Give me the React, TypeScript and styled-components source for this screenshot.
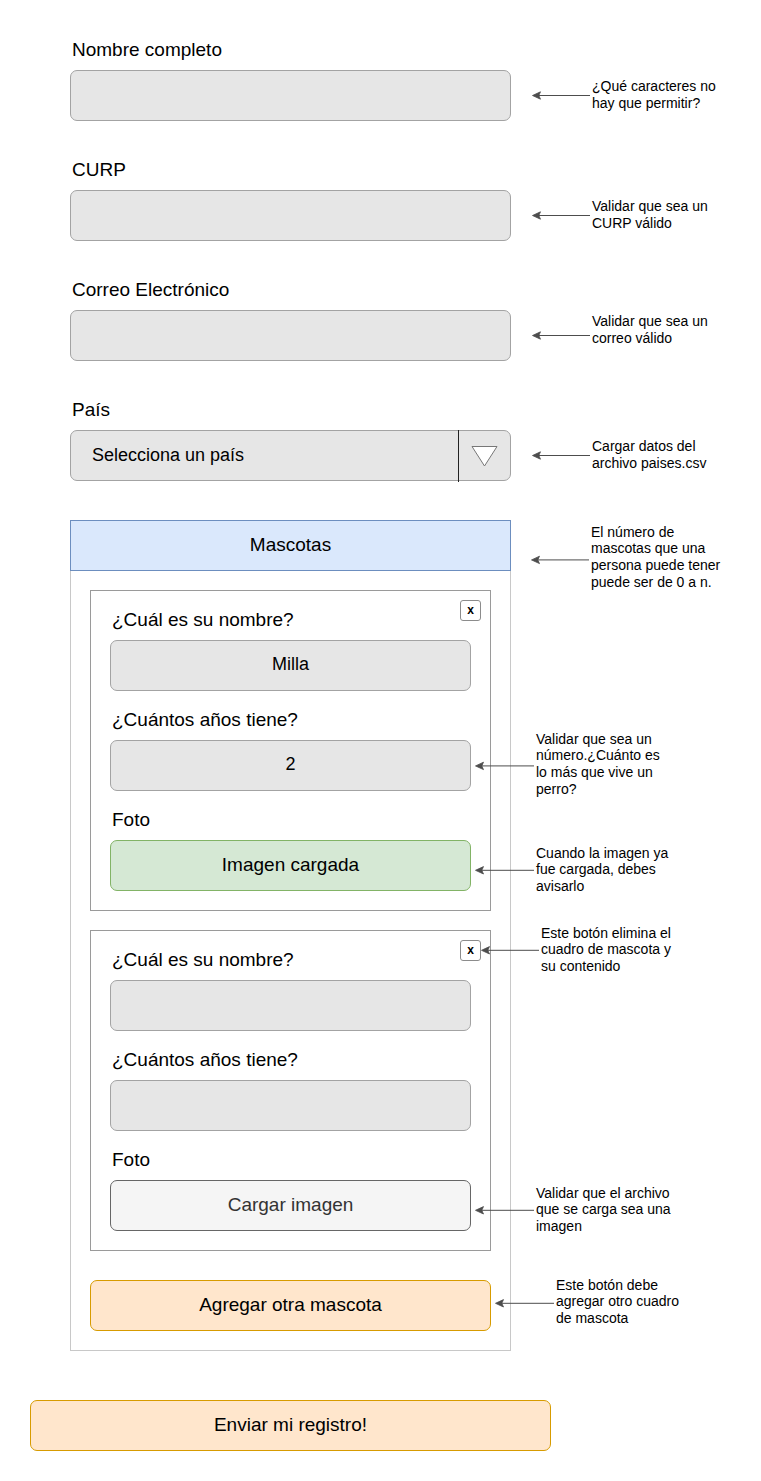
import React from "react";
import styled, { createGlobalStyle } from "styled-components";

const GlobalStyle = createGlobalStyle`
  html, body {
    margin: 0;
    padding: 0;
    background: #ffffff;
  }
  body {
    font-family: "Liberation Sans", Arial, Helvetica, sans-serif;
    color: #000000;
  }
  * { box-sizing: border-box; }
`;

const Page = styled.div`
  width: 761px;
  min-height: 1481px;
  padding: 39px 0 30px 30px;
`;

const Form = styled.div`
  display: flex;
  flex-direction: column;
  margin-left: 40px;
`;

const Field = styled.div<{ $after?: number }>`
  display: flex;
  flex-direction: column;
  margin-bottom: ${(p) => p.$after ?? 38}px;
`;

const FieldLabel = styled.div`
  font-size: 19px;
  line-height: 21px;
  margin: 0 0 10px 2px;
  white-space: nowrap;
`;

const Row = styled.div`
  display: flex;
  align-items: center;
`;

const InputBox = styled.div<{ $width?: number }>`
  width: ${(p) => p.$width ?? 441}px;
  height: 51px;
  border: 1px solid #a3a3a3;
  border-radius: 7px;
  background: #e6e6e6;
  display: flex;
  align-items: center;
  justify-content: center;
  padding-bottom: 2px;
  font-size: 18px;
  position: relative;
  flex-shrink: 0;
`;

const SelectBox = styled(InputBox)`
  justify-content: flex-start;
  padding-bottom: 0;
`;

const SelectValue = styled.div`
  flex: 1;
  padding-left: 21px;
  padding-bottom: 1px;
  font-size: 18px;
  white-space: nowrap;
`;

const SelectToggle = styled.div`
  width: 52px;
  align-self: stretch;
  margin: -1px 0 -2px 0;
  border-left: 1px solid #222222;
  display: flex;
  align-items: center;
  justify-content: center;
  padding-bottom: 1px;
`;

const Panel = styled.div`
  width: 441px;
  border: 1px solid #c8c8c8;
  padding: 0 19px 19px;
  display: flex;
  flex-direction: column;
`;

const PanelHeader = styled.div`
  position: relative;
  height: 51px;
  margin: -1px -20px 0;
  background: #dae8fc;
  border: 1px solid #6c8ebf;
  display: flex;
  align-items: center;
  justify-content: center;
  padding-bottom: 2px;
  font-size: 19px;
`;

const PetCard = styled.div`
  position: relative;
  width: 401px;
  margin-top: 19px;
  border: 1px solid #9a9a9a;
  padding: 18px 19px 19px;
  display: flex;
  flex-direction: column;
`;

const PetLabel = styled.div`
  font-size: 19px;
  line-height: 21px;
  margin: 0 0 10px 2px;
  white-space: nowrap;
`;

const PetInput = styled(InputBox)`
  width: 361px;
  margin-bottom: 18px;
`;

type Tone = "loaded" | "upload";

const PhotoButton = styled.div<{ $tone: Tone }>`
  position: relative;
  width: 361px;
  height: 51px;
  border-radius: 7px;
  display: flex;
  align-items: center;
  justify-content: center;
  padding-bottom: 2px;
  font-size: 19px;
  background: ${(p) => (p.$tone === "loaded" ? "#d5e8d4" : "#f5f5f5")};
  border: 1px solid ${(p) => (p.$tone === "loaded" ? "#82b366" : "#666666")};
  color: ${(p) => (p.$tone === "loaded" ? "#000000" : "#333333")};
`;

const CloseButton = styled.div`
  position: absolute;
  top: 9px;
  right: 9px;
  width: 21px;
  height: 21px;
  border: 1px solid #8c8c8c;
  border-radius: 3px;
  background: #ffffff;
  display: flex;
  align-items: center;
  justify-content: center;
  font-size: 12px;
  font-weight: bold;
  line-height: 1;
  padding-bottom: 2px;
`;

const ActionButton = styled.div<{ $width: number }>`
  position: relative;
  width: ${(p) => p.$width}px;
  height: 51px;
  border: 1px solid #d79b00;
  border-radius: 7px;
  background: #ffe6cc;
  display: flex;
  align-items: center;
  justify-content: center;
  padding-bottom: 2px;
  font-size: 19px;
`;

const AddButtonWrap = styled.div`
  margin-top: 29px;
  display: flex;
`;

const SubmitWrap = styled.div`
  margin-top: 49px;
  display: flex;
`;

const InlineCallout = styled.div<{ $gap: number; $dy: number }>`
  display: flex;
  align-items: center;
  margin-left: ${(p) => p.$gap}px;
  transform: translateY(${(p) => p.$dy}px);
`;

const FloatingCallout = styled.div<{ $gap: number; $dy: number }>`
  position: absolute;
  left: calc(100% + ${(p) => p.$gap}px);
  top: 50%;
  transform: translateY(calc(-50% + ${(p) => p.$dy}px));
  display: flex;
  align-items: center;
  pointer-events: none;
  z-index: 2;
`;

const Note = styled.div<{ $dy: number }>`
  margin-left: 2px;
  font-size: 14px;
  font-weight: normal;
  line-height: 16.8px;
  white-space: nowrap;
  color: #000000;
  text-align: left;
  transform: translateY(${(p) => p.$dy}px);
`;

const ArrowLine: React.FC<{ length: number }> = ({ length }) => (
  <svg width={length} height={11} viewBox={`0 0 ${length} 11`} style={{ display: "block", flexShrink: 0 }}>
    <line x1={6} y1={5.5} x2={length} y2={5.5} stroke="#4d4d4d" strokeWidth={1} />
    <path d="M0.5 5.5 L8.5 1.8 L6.8 5.5 L8.5 9.2 Z" fill="#4d4d4d" stroke="#4d4d4d" strokeWidth={0.8} strokeLinejoin="miter" />
  </svg>
);

type CalloutProps = {
  lines: string[];
  gap: number;
  length: number;
  dy?: number;
  noteDy?: number;
  floating?: boolean;
};

const Callout: React.FC<CalloutProps> = ({ lines, gap, length, dy = 0, noteDy = -1, floating }) => {
  const content = (
    <>
      <ArrowLine length={length} />
      <Note $dy={noteDy}>
        {lines.map((l, i) => (
          <React.Fragment key={i}>
            {l}
            {i < lines.length - 1 && <br />}
          </React.Fragment>
        ))}
      </Note>
    </>
  );
  return floating ? (
    <FloatingCallout $gap={gap} $dy={dy}>{content}</FloatingCallout>
  ) : (
    <InlineCallout $gap={gap} $dy={dy}>{content}</InlineCallout>
  );
};

const Triangle = () => (
  <svg width={27} height={22} viewBox="0 0 27 22" style={{ display: "block" }}>
    <path d="M1 1.5 L26 1.5 L13.5 21 Z" fill="#ffffff" stroke="#777777" strokeWidth={1} strokeLinejoin="miter" />
  </svg>
);

type Pet = {
  name: string;
  age: string;
  photo: Tone;
  closeNote?: string[];
  photoNote: string[];
  ageNote?: string[];
};

const pets: Pet[] = [
  {
    name: "Milla",
    age: "2",
    photo: "loaded",
    ageNote: ["Validar que sea un", "número.¿Cuánto es", "lo más que vive un", "perro?"],
    photoNote: ["Cuando la imagen ya", "fue cargada, debes", "avisarlo"],
  },
  {
    name: "",
    age: "",
    photo: "upload",
    closeNote: ["Este botón elimina el", "cuadro de mascota y", "su contenido"],
    photoNote: ["Validar que el archivo", "que se carga sea una", "imagen"],
  },
];

const fields = [
  { label: "Nombre completo", note: ["¿Qué caracteres no", "hay que permitir?"], noteDy: -1 },
  { label: "CURP", note: ["Validar que sea un", "CURP válido"], noteDy: -1 },
  { label: "Correo Electrónico", note: ["Validar que sea un", "correo válido"], noteDy: -6 },
];

const PetBlock: React.FC<{ pet: Pet }> = ({ pet }) => (
  <PetCard>
    <CloseButton>
      x
      {pet.closeNote && <Callout floating lines={pet.closeNote} gap={1} length={58} dy={0} noteDy={-1} />}
    </CloseButton>
    <PetLabel>¿Cuál es su nombre?</PetLabel>
    <PetInput>{pet.name}</PetInput>
    <PetLabel>¿Cuántos años tiene?</PetLabel>
    <PetInput>
      {pet.age}
      {pet.ageNote && <Callout floating lines={pet.ageNote} gap={5} length={59} dy={0} noteDy={-1} />}
    </PetInput>
    <PetLabel>Foto</PetLabel>
    <PhotoButton $tone={pet.photo}>
      {pet.photo === "loaded" ? "Imagen cargada" : "Cargar imagen"}
      <Callout floating lines={pet.photoNote} gap={5} length={59} dy={5} noteDy={-1} />
    </PhotoButton>
  </PetCard>
);

export default function App() {
  return (
    <>
      <GlobalStyle />
      <Page>
        <Form>
          {fields.map((f) => (
            <Field key={f.label}>
              <FieldLabel>{f.label}</FieldLabel>
              <Row>
                <InputBox />
                <Callout lines={f.note} gap={21} length={58} noteDy={f.noteDy} />
              </Row>
            </Field>
          ))}
          <Field $after={39}>
            <FieldLabel>País</FieldLabel>
            <Row>
              <SelectBox>
                <SelectValue>Selecciona un país</SelectValue>
                <SelectToggle>
                  <Triangle />
                </SelectToggle>
              </SelectBox>
              <Callout lines={["Cargar datos del", "archivo paises.csv"]} gap={21} length={58} noteDy={-1} />
            </Row>
          </Field>

          <Panel>
            <PanelHeader>
              Mascotas
              <Callout
                floating
                lines={["El número de", "mascotas que una", "persona puede tener", "puede ser de 0 a n."]}
                gap={21}
                length={58}
                dy={14}
                noteDy={-2}
              />
            </PanelHeader>
            {pets.map((p, i) => (
              <PetBlock key={i} pet={p} />
            ))}
            <AddButtonWrap>
              <ActionButton $width={401}>
                Agregar otra mascota
                <Callout
                  floating
                  lines={["Este botón debe", "agregar otro cuadro", "de mascota"]}
                  gap={5}
                  length={59}
                  dy={-2}
                  noteDy={-2}
                />
              </ActionButton>
            </AddButtonWrap>
          </Panel>
        </Form>
        <SubmitWrap>
          <ActionButton $width={521}>Enviar mi registro!</ActionButton>
        </SubmitWrap>
      </Page>
    </>
  );
}
